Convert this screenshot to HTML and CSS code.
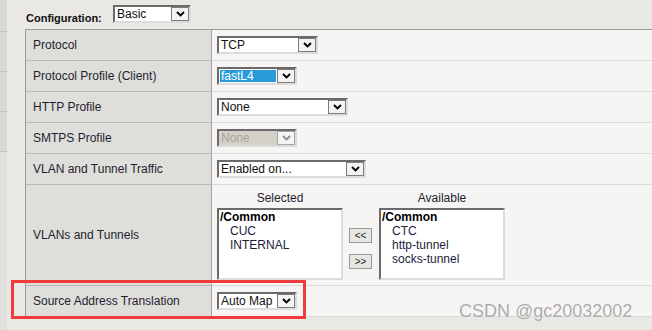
FILE: index.html
```html
<!DOCTYPE html>
<html lang="en">
<head>
    <meta charset="UTF-8">
    <title>Virtual Server Configuration</title>
    <link rel="stylesheet" href="styles.css">
</head>
<body>
    <div class="page">
        <div class="side">
            <div class="side-tab first"></div>
            <div class="side-tab"></div>
            <div class="side-tab"></div>
            <div class="side-tab"></div>
        </div>

        <div class="main">
            <div class="config">
                <span class="config-label">Configuration:</span>
                <div class="sel w78">
                    <span class="sel-text">Basic</span>
                    <span class="sel-btn"><svg width="9" height="6" viewBox="0 0 9 6"><polyline points="1,1 4.5,4.5 8,1"/></svg></span>
                </div>
            </div>

            <table class="props">
                <tr>
                    <td class="label">Protocol</td>
                    <td class="value">
                        <div class="sel w101">
                            <span class="sel-text">TCP</span>
                            <span class="sel-btn"><svg width="9" height="6" viewBox="0 0 9 6"><polyline points="1,1 4.5,4.5 8,1"/></svg></span>
                        </div>
                    </td>
                </tr>
                <tr>
                    <td class="label">Protocol Profile (Client)</td>
                    <td class="value">
                        <div class="sel w80 focused">
                            <span class="sel-text">fastL4</span>
                            <span class="sel-btn"><svg width="9" height="6" viewBox="0 0 9 6"><polyline points="1,1 4.5,4.5 8,1"/></svg></span>
                        </div>
                    </td>
                </tr>
                <tr>
                    <td class="label">HTTP Profile</td>
                    <td class="value">
                        <div class="sel w131">
                            <span class="sel-text">None</span>
                            <span class="sel-btn"><svg width="9" height="6" viewBox="0 0 9 6"><polyline points="1,1 4.5,4.5 8,1"/></svg></span>
                        </div>
                    </td>
                </tr>
                <tr>
                    <td class="label">SMTPS Profile</td>
                    <td class="value">
                        <div class="sel w80 disabled">
                            <span class="sel-text">None</span>
                            <span class="sel-btn"><svg width="9" height="6" viewBox="0 0 9 6"><polyline points="1,1 4.5,4.5 8,1"/></svg></span>
                        </div>
                    </td>
                </tr>
                <tr>
                    <td class="label">VLAN and Tunnel Traffic</td>
                    <td class="value">
                        <div class="sel w149">
                            <span class="sel-text">Enabled on...</span>
                            <span class="sel-btn"><svg width="9" height="6" viewBox="0 0 9 6"><polyline points="1,1 4.5,4.5 8,1"/></svg></span>
                        </div>
                    </td>
                </tr>
                <tr>
                    <td class="label tall">VLANs and Tunnels</td>
                    <td class="value vlans">
                        <div class="vlan-box">
                            <div class="vlan-col">
                                <div class="vlan-head">Selected</div>
                                <div class="listbox">
                                    <div class="grp">/Common</div>
                                    <div class="item">CUC</div>
                                    <div class="item">INTERNAL</div>
                                </div>
                            </div>
                            <div class="move-col">
                                <div class="mvbtn">&lt;&lt;</div>
                                <div class="mvbtn">&gt;&gt;</div>
                            </div>
                            <div class="vlan-col">
                                <div class="vlan-head">Available</div>
                                <div class="listbox">
                                    <div class="grp">/Common</div>
                                    <div class="item">CTC</div>
                                    <div class="item">http-tunnel</div>
                                    <div class="item">socks-tunnel</div>
                                </div>
                            </div>
                        </div>
                    </td>
                </tr>
                <tr>
                    <td class="label">Source Address Translation</td>
                    <td class="value">
                        <div class="sel w80">
                            <span class="sel-text">Auto Map</span>
                            <span class="sel-btn"><svg width="9" height="6" viewBox="0 0 9 6"><polyline points="1,1 4.5,4.5 8,1"/></svg></span>
                        </div>
                    </td>
                </tr>
            </table>
        </div>
    </div>

    <!-- annotation overlays -->
    <div class="mark"></div>
    <div class="watermark">CSDN @gc20032002</div>
</body>
</html>
```

FILE: styles.css
```css
body {
    margin: 0;
    width: 652px;
    height: 330px;
    overflow: hidden;
    position: relative;
    background-color: #e9e8e4;
    font-family: "Liberation Sans", Arial, sans-serif;
    font-size: 12px;
    color: #222;
}
.page {
    display: flex;
}
.side {
    width: 7px;
    flex: none;
    height: 330px;
    background-color: #e1e0dd;
}
.side-tab {
    height: 39px;
    background-color: #d9d8d5;
    border-bottom: 1px solid #c4c3c0;
}
.side-tab.first {
    height: 31px;
}
.main {
    margin-left: 18px;
    flex: 1;
}
.config {
    display: flex;
    align-items: flex-start;
    height: 29px;
}
.config-label {
    width: 87px;
    padding-left: 1px;
    margin-top: 11px;
    font-size: 11px;
    font-weight: bold;
    line-height: 14px;
    color: #111;
}
.config .sel {
    margin-top: 5px;
}
.props {
    border-collapse: separate;
    border-spacing: 0;
    width: 627px;
    border-top: 1px solid #9b9b9b;
    border-left: 1px solid #9b9b9b;
}
.props td {
    height: 30px;
    padding: 0;
    vertical-align: middle;
    background-color: #f6f5f3;
    border-bottom: 1px solid #dbdad7;
}
.props td.label {
    width: 178px;
    padding-left: 7px;
    background-color: #dfdedb;
    border-bottom-color: #b8b8b8;
    border-right: 1px solid #a3a3a3;
    color: #1e1e30;
}
.props td.tall {
    height: 100px;
}
.props td.value {
    padding-left: 5px;
}
.props td.vlans {
    vertical-align: top;
}

/* classic drop-down */
.sel {
    display: flex;
    height: 18px;
    box-sizing: border-box;
    border: 2px solid;
    border-color: #6a6a6a #dcdcdc #dcdcdc #6a6a6a;
    background-color: #fff;
}
.sel-text {
    flex: 1;
    padding-left: 2px;
    line-height: 14px;
    color: #111;
    white-space: nowrap;
    overflow: hidden;
}
.sel-btn {
    width: 18px;
    box-sizing: border-box;
    border: 1px solid #7c7c7c;
    background-color: #f3f3f3;
    display: flex;
    align-items: center;
    justify-content: center;
}
.sel-btn polyline {
    fill: none;
    stroke: #000;
    stroke-width: 1.9;
}
.sel.focused .sel-text {
    margin: 1px;
    padding-left: 1px;
    line-height: 12px;
    background-color: #2a9bda;
    color: #fff;
}
.sel.disabled .sel-text {
    background-color: #d4d0c8;
    color: #a6a39c;
}
.sel.disabled .sel-btn {
    border-color: #a7a7a7;
}
.sel.disabled polyline {
    stroke: #8c8c8c;
}
.w78 { width: 78px; }
.w80 { width: 80px; }
.w101 { width: 101px; }
.w131 { width: 131px; }
.w149 { width: 149px; }

/* vlan selector */
.vlan-box {
    display: flex;
    padding-top: 5px;
}
.vlan-col {
    width: 126px;
    display: flex;
    flex-direction: column;
    align-items: center;
}
.vlan-head {
    line-height: 16px;
    margin-bottom: 2px;
    color: #1e1e30;
}
.listbox {
    width: 126px;
    height: 72px;
    box-sizing: border-box;
    border: 2px solid;
    border-color: #6a6a6a #dcdcdc #dcdcdc #6a6a6a;
    background-color: #fff;
    padding-left: 1px;
    line-height: 14px;
    color: #1c1c3c;
}
.grp {
    font-weight: bold;
    color: #000;
}
.item {
    padding-left: 10px;
}
.move-col {
    width: 36px;
    padding-top: 38px;
    box-sizing: border-box;
    padding-left: 6px;
}
.mvbtn {
    width: 23px;
    height: 15px;
    box-sizing: border-box;
    margin-bottom: 11px;
    border: 1px solid #989898;
    background-color: #e7e6e3;
    font-size: 10px;
    line-height: 13px;
    text-align: center;
    color: #222;
}
.mark {
    position: absolute;
    left: 11px;
    top: 280px;
    width: 295px;
    height: 39px;
    box-sizing: border-box;
    border: 3px solid #ef3b3b;
}
.watermark {
    position: absolute;
    left: 459px;
    top: 302px;
    font-size: 18px;
    line-height: 18px;
    color: #ababab;
    text-shadow: 0 0 1px #fff;
}
```
